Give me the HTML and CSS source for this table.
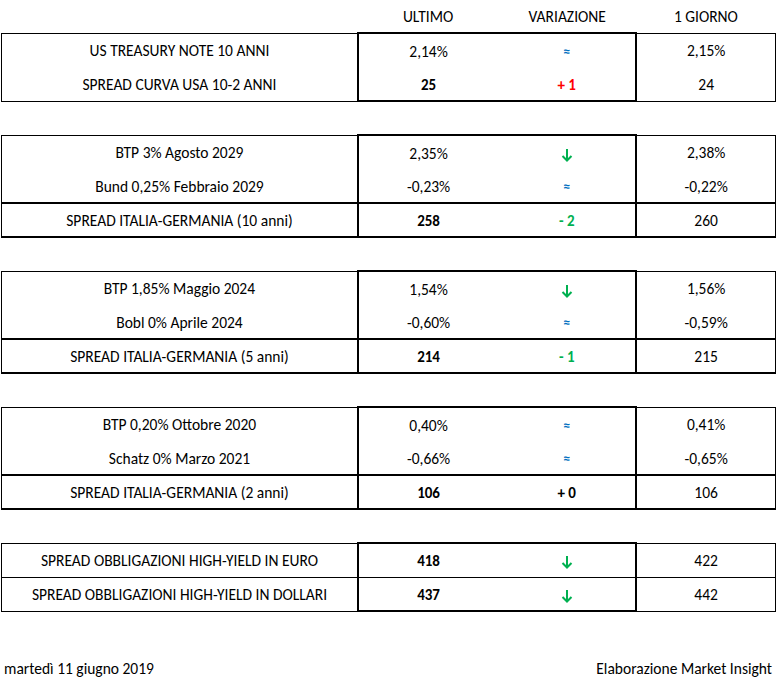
FILE: index.html
```html
<!DOCTYPE html>
<html lang="it">
<head>
<meta charset="utf-8">
<title>Spread</title>
<link rel="stylesheet" href="styles.css">
</head>
<body>
<table class="sheet">
  <colgroup>
    <col class="col-a"><col class="col-u"><col class="col-v"><col class="col-c">
  </colgroup>
  <tr class="head">
    <td></td><td>ULTIMO</td><td>VARIAZIONE</td><td>1 GIORNO</td>
  </tr>
  <tr class="top">
    <td class="a">US TREASURY NOTE 10 ANNI</td><td class="u">2,14%</td><td class="v"><span class="eq">≈</span></td><td class="c">2,15%</td>
  </tr>
  <tr class="bot">
    <td class="a">SPREAD CURVA USA 10-2 ANNI</td><td class="u b">25</td><td class="v"><span class="b red">+ 1</span></td><td class="c">24</td>
  </tr>
  <tr class="gap"><td colspan="4"></td></tr>

  <tr class="top">
    <td class="a">BTP 3% Agosto 2029</td><td class="u">2,35%</td><td class="v"><svg class="arr" viewBox="0 0 12 14"><path d="M6 1V12.5M1.5 8L6 12.5L10.5 8"/></svg></td><td class="c">2,38%</td>
  </tr>
  <tr>
    <td class="a">Bund 0,25% Febbraio 2029</td><td class="u">-0,23%</td><td class="v"><span class="eq">≈</span></td><td class="c">-0,22%</td>
  </tr>
  <tr class="spread">
    <td class="a">SPREAD ITALIA-GERMANIA (10 anni)</td><td class="u b">258</td><td class="v"><span class="b green">- 2</span></td><td class="c">260</td>
  </tr>
  <tr class="gap"><td colspan="4"></td></tr>

  <tr class="top">
    <td class="a">BTP 1,85% Maggio 2024</td><td class="u">1,54%</td><td class="v"><svg class="arr" viewBox="0 0 12 14"><path d="M6 1V12.5M1.5 8L6 12.5L10.5 8"/></svg></td><td class="c">1,56%</td>
  </tr>
  <tr>
    <td class="a">Bobl 0% Aprile 2024</td><td class="u">-0,60%</td><td class="v"><span class="eq">≈</span></td><td class="c">-0,59%</td>
  </tr>
  <tr class="spread">
    <td class="a">SPREAD ITALIA-GERMANIA (5 anni)</td><td class="u b">214</td><td class="v"><span class="b green">- 1</span></td><td class="c">215</td>
  </tr>
  <tr class="gap"><td colspan="4"></td></tr>

  <tr class="top">
    <td class="a">BTP 0,20% Ottobre 2020</td><td class="u">0,40%</td><td class="v"><span class="eq">≈</span></td><td class="c">0,41%</td>
  </tr>
  <tr>
    <td class="a">Schatz 0% Marzo 2021</td><td class="u">-0,66%</td><td class="v"><span class="eq">≈</span></td><td class="c">-0,65%</td>
  </tr>
  <tr class="spread">
    <td class="a">SPREAD ITALIA-GERMANIA (2 anni)</td><td class="u b">106</td><td class="v"><span class="b">+ 0</span></td><td class="c">106</td>
  </tr>
  <tr class="gap"><td colspan="4"></td></tr>

  <tr class="top mid">
    <td class="a">SPREAD OBBLIGAZIONI HIGH-YIELD IN EURO</td><td class="u b">418</td><td class="v"><svg class="arr" viewBox="0 0 12 14"><path d="M6 1V12.5M1.5 8L6 12.5L10.5 8"/></svg></td><td class="c">422</td>
  </tr>
  <tr class="bot">
    <td class="a">SPREAD OBBLIGAZIONI HIGH-YIELD IN DOLLARI</td><td class="u b">437</td><td class="v"><svg class="arr" viewBox="0 0 12 14"><path d="M6 1V12.5M1.5 8L6 12.5L10.5 8"/></svg></td><td class="c">442</td>
  </tr>
</table>
<div class="footer">
  <span>martedì 11 giugno 2019</span>
  <span>Elaborazione Market Insight</span>
</div>
</body>
</html>
```

FILE: styles.css
```css
html, body {
  margin: 0;
  padding: 0;
  background: #fff;
}
body {
  font-family: Carlito, Lato, "Liberation Sans", sans-serif;
  font-size: 15.5px;
  color: #000;
}
.sheet {
  border-collapse: collapse;
  table-layout: fixed;
  width: 775px;
  margin-left: 1px;
}
.col-a { width: 356px; }
.col-u { width: 140px; }
.col-v { width: 138px; }
.col-c { width: 139px; }

.sheet td {
  box-sizing: border-box;
  height: 34px;
  padding: 2px 0 0;
  text-align: center;
  vertical-align: middle;
  line-height: 16px;
  white-space: nowrap;
}
.head td { height: 33px; padding-top: 2px; }
.gap td { height: 34px; padding: 0; }

.a { border-left: 1px solid #000; }
.u { border-left: 2px solid #000; }
.v { border-right: 2px solid #000; }
.c { border-right: 1px solid #000; }

.top .a, .top .c { border-top: 1px solid #000; }
.top .u, .top .v { border-top: 2px solid #000; }
.bot .a, .bot .c { border-bottom: 1px solid #000; }
.bot .u, .bot .v { border-bottom: 2px solid #000; }
.spread td { border-top: 2px solid #000; border-bottom: 2px solid #000; }
.mid td { border-bottom: 1px solid #000; }

.b { font-weight: 700; font-size: 15px; }
.red { color: #ff0000; }
.green { color: #00b050; }
.eq {
  color: #0070c0;
  font-weight: 700;
  font-size: 14px;
}
.arr {
  width: 12px;
  height: 14px;
  display: inline-block;
  vertical-align: middle;
}
.arr path {
  fill: none;
  stroke: #00b050;
  stroke-width: 2;
}

.footer {
  display: flex;
  justify-content: space-between;
  width: 768px;
  padding-left: 4px;
  margin-top: 48px;
  line-height: 18px;
}
```
